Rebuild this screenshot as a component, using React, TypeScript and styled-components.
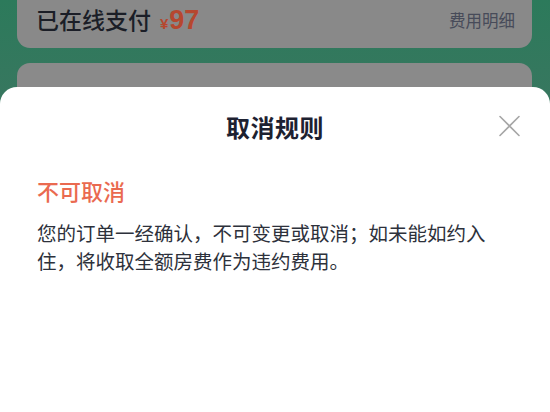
import React from "react";
import styled, { createGlobalStyle } from "styled-components";

const GlobalStyle = createGlobalStyle`
  html, body {
    margin: 0;
    padding: 0;
    background: #ffffff;
  }
  body {
    font-family: "Noto Sans CJK SC", "Noto Sans", sans-serif;
  }
`;

const Page = styled.div`
  position: relative;
  width: 550px;
  height: 412px;
  overflow: hidden;
  background: linear-gradient(180deg, #2c7a5b 0%, #3f7562 40%, #4a7464 100%);
`;

const Cards = styled.div`
  display: flex;
  flex-direction: column;
  gap: 15px;
  padding: 0 18px 0 17px;
`;

const PaidCard = styled.div`
  display: flex;
  align-items: center;
  justify-content: space-between;
  height: 48px;
  padding: 0 17px 8px 19px;
  box-sizing: border-box;
  background: #898989;
  border-radius: 0 0 13px 13px;
`;

const PaidLabel = styled.div`
  display: flex;
  align-items: baseline;
  gap: 9px;
  font-size: 23px;
  font-weight: 500;
  color: #1b1e27;
  line-height: 1;
`;

const Price = styled.span`
  font-family: "Liberation Sans", Arial, sans-serif;
  font-weight: 700;
  font-size: 27px;
  color: #b6472f;
`;

const Yen = styled.span`
  font-size: 15px;
  margin-right: 1px;
`;

const DetailLink = styled.div`
  font-size: 16.5px;
  color: #474b59;
  line-height: 1;
`;

const BlankCard = styled.div`
  height: 80px;
  background: #8a8a8a;
  border-radius: 13px;
`;

const Sheet = styled.div`
  position: absolute;
  left: 0;
  right: 0;
  top: 87px;
  bottom: 0;
  background: #ffffff;
  border-radius: 17px 17px 0 0;
`;

const SheetHeader = styled.div`
  display: grid;
  grid-template-columns: 1fr auto 1fr;
  align-items: center;
  height: 78px;
  padding: 0 29px 0 29px;
`;

const SheetTitle = styled.h2`
  grid-column: 2;
  margin: 0;
  font-size: 24px;
  font-weight: 700;
  color: #1d2131;
  letter-spacing: 0.5px;
`;

const CloseButton = styled.button`
  grid-column: 3;
  justify-self: end;
  display: flex;
  padding: 0;
  border: none;
  background: none;
  cursor: pointer;
`;

const SheetBody = styled.div`
  padding: 10px 37px 0 37px;
`;

const RuleTitle = styled.div`
  font-size: 22px;
  line-height: 30px;
  font-weight: 500;
  color: #ea6a50;
`;

const RuleText = styled.p`
  margin: 14px 0 0;
  font-size: 19.5px;
  line-height: 28px;
  color: #2d313b;
`;

const CloseIcon = () => (
  <svg width="23" height="22" viewBox="0 0 23 22" fill="none">
    <path d="M2 1.5L21 20.5M21 1.5L2 20.5" stroke="#a6a6a6" strokeWidth="1.6" strokeLinecap="round" />
  </svg>
);

export default function App() {
  return (
    <Page>
      <GlobalStyle />
      <Cards>
        <PaidCard>
          <PaidLabel>
            已在线支付
            <Price>
              <Yen>¥</Yen>97
            </Price>
          </PaidLabel>
          <DetailLink>费用明细</DetailLink>
        </PaidCard>
        <BlankCard />
      </Cards>
      <Sheet>
        <SheetHeader>
          <SheetTitle>取消规则</SheetTitle>
          <CloseButton aria-label="关闭">
            <CloseIcon />
          </CloseButton>
        </SheetHeader>
        <SheetBody>
          <RuleTitle>不可取消</RuleTitle>
          <RuleText>
            您的订单一经确认，不可变更或取消；如未能如约入住，将收取全额房费作为违约费用。
          </RuleText>
        </SheetBody>
      </Sheet>
    </Page>
  );
}
